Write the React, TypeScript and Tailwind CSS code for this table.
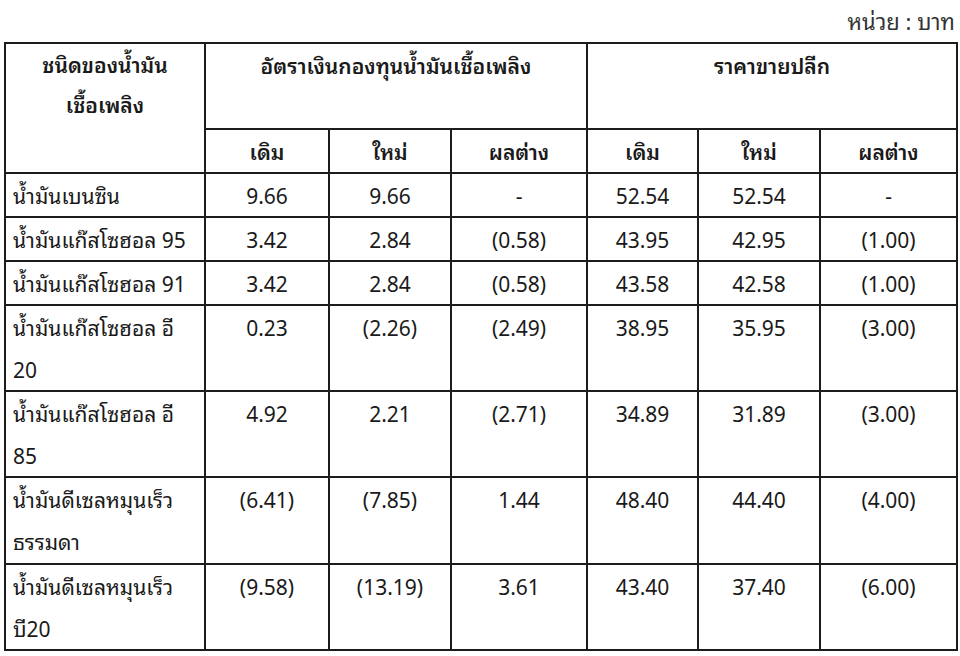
import React from 'react';

type Row = {
    name: string[];
    fundOld: string;
    fundNew: string;
    fundDiff: string;
    priceOld: string;
    priceNew: string;
    priceDiff: string;
    h: string;
};

const rows: Row[] = [
    { name: ['น้ำมันเบนซิน'], fundOld: '9.66', fundNew: '9.66', fundDiff: '-', priceOld: '52.54', priceNew: '52.54', priceDiff: '-', h: 'h-[43px]' },
    { name: ['น้ำมันแก๊สโซฮอล 95'], fundOld: '3.42', fundNew: '2.84', fundDiff: '(0.58)', priceOld: '43.95', priceNew: '42.95', priceDiff: '(1.00)', h: 'h-[44px]' },
    { name: ['น้ำมันแก๊สโซฮอล 91'], fundOld: '3.42', fundNew: '2.84', fundDiff: '(0.58)', priceOld: '43.58', priceNew: '42.58', priceDiff: '(1.00)', h: 'h-[44px]' },
    { name: ['น้ำมันแก๊สโซฮอล อี', '20'], fundOld: '0.23', fundNew: '(2.26)', fundDiff: '(2.49)', priceOld: '38.95', priceNew: '35.95', priceDiff: '(3.00)', h: 'h-[86px]' },
    { name: ['น้ำมันแก๊สโซฮอล อี', '85'], fundOld: '4.92', fundNew: '2.21', fundDiff: '(2.71)', priceOld: '34.89', priceNew: '31.89', priceDiff: '(3.00)', h: 'h-[86px]' },
    { name: ['น้ำมันดีเซลหมุนเร็ว', 'ธรรมดา'], fundOld: '(6.41)', fundNew: '(7.85)', fundDiff: '1.44', priceOld: '48.40', priceNew: '44.40', priceDiff: '(4.00)', h: 'h-[87px]' },
    { name: ['น้ำมันดีเซลหมุนเร็ว', 'บี20'], fundOld: '(9.58)', fundNew: '(13.19)', fundDiff: '3.61', priceOld: '43.40', priceNew: '37.40', priceDiff: '(6.00)', h: 'h-[86px]' },
];

const cell = 'border-2 border-[#1c1c1c] p-0 align-top';
const num = `${cell} text-center`;

export default function App() {
    return (
        <div
            className="min-h-[656px] w-[960px] bg-white px-[4px] text-[21px] leading-[42px] text-[#1a1a1a]"
            style={{
                fontFamily:
                    '"Noto Sans Thai Looped", Loma, Garuda, "Noto Serif Thai", "Noto Sans Thai", Tahoma, "Noto Sans", sans-serif',
            }}
        >
            {/* Unit label */}
            <div className="flex h-[42px] items-start justify-end pr-[1px] text-[#333]">
                <span className="text-[22px] leading-[40px]">หน่วย : บาท</span>
            </div>

            <table className="w-[952px] table-fixed border-collapse">
                <colgroup>
                    <col className="w-[200px]" />
                    <col className="w-[124px]" />
                    <col className="w-[122px]" />
                    <col className="w-[136px]" />
                    <col className="w-[111px]" />
                    <col className="w-[122px]" />
                    <col className="w-[137px]" />
                </colgroup>
                <thead>
                    <tr className="h-[86px]">
                        <th rowSpan={2} className={`${cell} text-center font-semibold leading-[40px]`}>
                            ชนิดของน้ำมัน
                            <br />
                            เชื้อเพลิง
                        </th>
                        <th colSpan={3} className={`${cell} text-center font-semibold`}>
                            อัตราเงินกองทุนน้ำมันเชื้อเพลิง
                        </th>
                        <th colSpan={3} className={`${cell} text-center font-semibold`}>
                            ราคาขายปลีก
                        </th>
                    </tr>
                    <tr className="h-[44px]">
                        {['เดิม', 'ใหม่', 'ผลต่าง', 'เดิม', 'ใหม่', 'ผลต่าง'].map((t, i) => (
                            <th key={i} className={`${cell} text-center font-semibold`}>
                                {t}
                            </th>
                        ))}
                    </tr>
                </thead>
                <tbody>
                    {rows.map((r, i) => (
                        <tr key={i} className={r.h}>
                            <td className={`${cell} pl-[7px]`}>
                                {r.name.map((line, j) => (
                                    <div key={j}>{line}</div>
                                ))}
                            </td>
                            <td className={num}>{r.fundOld}</td>
                            <td className={num}>{r.fundNew}</td>
                            <td className={num}>{r.fundDiff}</td>
                            <td className={num}>{r.priceOld}</td>
                            <td className={num}>{r.priceNew}</td>
                            <td className={num}>{r.priceDiff}</td>
                        </tr>
                    ))}
                </tbody>
            </table>
        </div>
    );
}
